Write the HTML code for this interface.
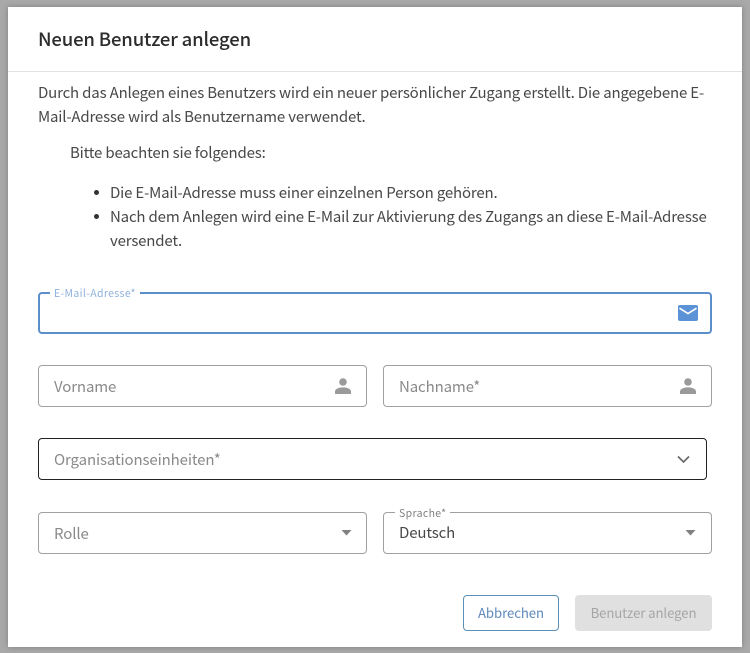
<!DOCTYPE html>
<html lang="de">
<head>
<meta charset="utf-8">
<style>
html,body{margin:0;padding:0;width:750px;height:653px;overflow:hidden;background:#a9a9a9;}
body{position:relative;font-family:"Noto Sans CJK JP","Liberation Sans",sans-serif;color:#484848;}
#modal{position:absolute;left:8px;top:7px;width:734px;height:640px;background:#fff;box-shadow:0 0 6px rgba(0,0,0,.25);}
.t{position:absolute;white-space:nowrap;font-size:15px;line-height:24px;letter-spacing:-.17px;}
.box{position:absolute;box-sizing:border-box;background:#fff;border:1px solid #a0a0a0;border-radius:4px;}
.ph{color:#8a8a8a;font-size:15px;letter-spacing:-.12px;}
.lab{position:absolute;white-space:nowrap;font-size:10.5px;line-height:12px;background:#fff;padding:0 4px;letter-spacing:.35px;}
svg{position:absolute;}
</style>
</head>
<body>
<div id="modal"></div>
<div class="t" style="left:38px;top:27px;font-size:18.5px;color:#2c2c2c;font-weight:500;letter-spacing:-.15px;">Neuen Benutzer anlegen</div>
<div style="position:absolute;left:8px;top:71px;width:734px;height:1px;background:#e2e2e2;"></div>

<div class="t" style="left:38px;top:81px;">Durch das Anlegen eines Benutzers wird ein neuer persönlicher Zugang erstellt. Die angegebene E-</div>
<div class="t" style="left:38px;top:105px;">Mail-Adresse wird als Benutzername verwendet.</div>
<div class="t" style="left:70px;top:141px;">Bitte beachten sie folgendes:</div>
<div style="position:absolute;left:94px;top:190px;width:5px;height:5px;border-radius:50%;background:#333;"></div>
<div class="t" style="left:110px;top:181px;">Die E-Mail-Adresse muss einer einzelnen Person gehören.</div>
<div style="position:absolute;left:94px;top:214px;width:5px;height:5px;border-radius:50%;background:#333;"></div>
<div class="t" style="left:110px;top:205px;">Nach dem Anlegen wird eine E-Mail zur Aktivierung des Zugangs an diese E-Mail-Adresse</div>
<div class="t" style="left:110px;top:229px;">versendet.</div>

<!-- E-Mail -->
<div class="box" style="left:38px;top:292px;width:674px;height:42px;border:2px solid #5b8fca;"></div>
<div class="lab" style="left:50px;top:288px;color:#8fb2dc;">E-Mail-Adresse*</div>
<svg style="left:678px;top:305px;" width="20" height="16" viewBox="0 0 20 16"><rect x="0" y="0" width="20" height="16" rx="2" fill="#5b93d6"/><path d="M1.5 3.2 L10 8.6 L18.5 3.2" fill="none" stroke="#fff" stroke-width="1.6"/></svg>

<!-- Vorname / Nachname -->
<div class="box" style="left:38px;top:365px;width:329px;height:42px;"></div>
<div class="t ph" style="left:54px;top:375px;">Vorname</div>
<svg style="left:335px;top:378px;" width="16" height="16" viewBox="0 0 16 16"><circle cx="8" cy="4" r="3.8" fill="#9a9a9a"/><path d="M0 16 V13.5 C0 10.6 4.5 9.4 8 9.4 C11.5 9.4 16 10.6 16 13.5 V16 Z" fill="#9a9a9a"/></svg>
<div class="box" style="left:383px;top:365px;width:329px;height:42px;"></div>
<div class="t ph" style="left:399px;top:375px;">Nachname*</div>
<svg style="left:680px;top:378px;" width="16" height="16" viewBox="0 0 16 16"><circle cx="8" cy="4" r="3.8" fill="#9a9a9a"/><path d="M0 16 V13.5 C0 10.6 4.5 9.4 8 9.4 C11.5 9.4 16 10.6 16 13.5 V16 Z" fill="#9a9a9a"/></svg>

<!-- Organisationseinheiten -->
<div class="box" style="left:38px;top:438px;width:669px;height:42px;border-color:#222;"></div>
<div class="t ph" style="left:54px;top:448px;">Organisationseinheiten*</div>
<svg style="left:677px;top:455px;" width="13" height="9" viewBox="0 0 13 9"><path d="M1 1.5 L6.5 7 L12 1.5" fill="none" stroke="#666" stroke-width="1.6"/></svg>

<!-- Rolle / Sprache -->
<div class="box" style="left:38px;top:512px;width:329px;height:42px;"></div>
<div class="t ph" style="left:54px;top:522px;">Rolle</div>
<svg style="left:341px;top:530px;" width="11" height="6" viewBox="0 0 11 6"><path d="M.5 0 H10.5 L5.5 5.5 Z" fill="#808080"/></svg>
<div class="box" style="left:383px;top:512px;width:329px;height:42px;"></div>
<div class="lab" style="left:395px;top:508px;color:#808080;">Sprache*</div>
<div class="t" style="left:399px;top:521px;font-size:15px;letter-spacing:-.12px;">Deutsch</div>
<svg style="left:685px;top:530px;" width="11" height="6" viewBox="0 0 11 6"><path d="M.5 0 H10.5 L5.5 5.5 Z" fill="#808080"/></svg>

<!-- Buttons -->
<div class="box" style="left:463px;top:595px;width:96px;height:36px;border-color:#5b8fb5;"></div>
<div class="t" style="left:463px;width:96px;text-align:center;top:601px;color:#5f8abb;font-size:13.2px;letter-spacing:-.07px;">Abbrechen</div>
<div style="position:absolute;left:575px;top:595px;width:137px;height:36px;background:#e0e0e0;border-radius:4px;"></div>
<div class="t" style="left:575px;width:137px;text-align:center;top:601px;color:#a6a6a6;font-size:13.2px;letter-spacing:-.1px;">Benutzer anlegen</div>
</body>
</html>
